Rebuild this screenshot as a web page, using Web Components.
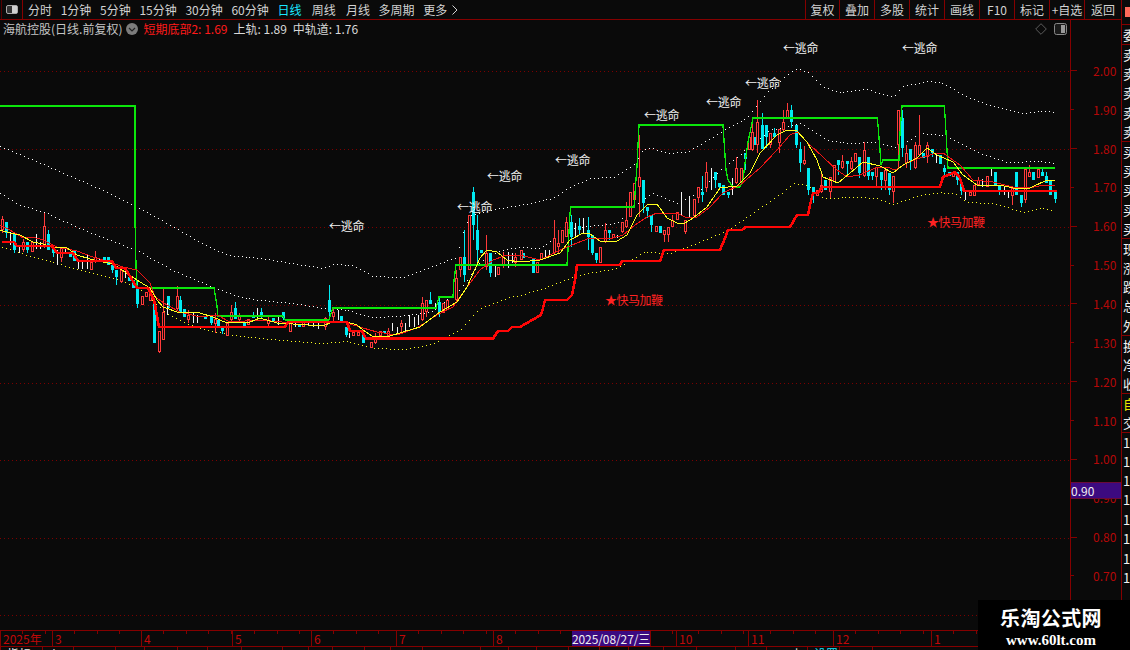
<!DOCTYPE html>
<html lang="zh"><head><meta charset="utf-8"><title>海航控股</title>
<style>
html,body{margin:0;padding:0;background:#0a0a0a;overflow:hidden}
body{font:12px "Noto Sans CJK SC","Liberation Sans",sans-serif;color:#cfcfcf}
</style></head>
<body><k-app></k-app>
<script>
const RED='#850000';
const FONT='"Noto Sans CJK SC","Liberation Sans",sans-serif';
function def(name,html,after){
  customElements.define(name,class extends HTMLElement{
    constructor(){super();this.attachShadow({mode:'open'}).innerHTML=html;if(after)after(this.shadowRoot,this);}
  });
}
def('k-toolbar',`<style>
:host{display:flex;height:20px;box-sizing:border-box;border-bottom:1px solid ${RED};align-items:stretch;font:12px/19px ${FONT};color:#d2d2d2;white-space:nowrap}
.box{width:22px;margin-left:1px;border-left:1px solid #500;border-right:1px solid ${RED};box-sizing:border-box;display:flex;align-items:center;justify-content:center}
.left{display:flex;gap:8.7px;margin-left:5px;align-items:center}
.on{color:#19e6ff}.w{margin-left:1.5px}
.more{display:flex;align-items:center;gap:5px}
.right{display:flex;margin-left:auto}
.right span{width:35px;box-sizing:border-box;border-left:1px solid ${RED};text-align:center}
.right span:first-child{width:34px}.right span:last-child{width:37px}
</style>
<div class="box"><svg width="12" height="9" viewBox="0 0 12 9"><rect x=".5" y=".5" width="11" height="8" rx="1.5" fill="#333" stroke="#aaa"/><rect x="6" y="1" width="5" height="7" fill="#d0d0d0"/></svg></div>
<div class="left"><span>分时</span><span>1分钟</span><span>5分钟</span><span>15分钟</span><span>30分钟</span><span>60分钟</span><span class="on">日线</span><span class="w">周线</span><span class="w">月线</span><span>多周期</span>
<span class="more">更多<svg width="6" height="10" viewBox="0 0 6 10"><path d="M.5.5 5 5 .5 9.5" fill="none" stroke="#d2d2d2"/></svg></span></div>
<div class="right"><span>复权</span><span>叠加</span><span>多股</span><span>统计</span><span>画线</span><span>F10</span><span>标记</span><span>+自选</span><span>返回</span></div>`);

def('k-legend',`<style>
:host{display:flex;height:18px;align-items:center;font:12px/18px ${FONT};color:#c4c4c4;white-space:nowrap;padding-left:3px}
svg.c{margin:0 5px 0 4px}
.r{color:#ff1a1a;margin-right:6px}.m{margin-right:6px;color:#d8d8d8}
.tools{margin-left:auto;display:flex;align-items:center;gap:7px;margin-right:3px}
</style>
<span>海航控股(日线.前复权)</span>
<svg class="c" width="12" height="12" viewBox="0 0 12 12"><circle cx="6" cy="6" r="6" fill="#7c7c7c"/><path d="M3 5l3 3 3-3" fill="none" stroke="#222" stroke-width="1.2"/></svg>
<span class="r">短期底部2: 1.69</span><span class="m">上轨: 1.89</span><span class="m">中轨道: 1.76</span>
<div class="tools"><svg width="12" height="12" viewBox="0 0 12 12"><path d="M6 .7 11.3 6 6 11.3.7 6z" fill="none" stroke="#5c5c5c"/></svg>
<svg width="13" height="12" viewBox="0 0 13 12"><rect x=".5" y=".5" width="12" height="11" rx="2" fill="#1a1a1a" stroke="#888"/><rect x="7" y="2" width="4" height="8" fill="#999"/></svg></div>`);

/* chart data: x in px, y measured on magnified crops (oy + Y/3) */
const C6=`r2,88,120,78,130;c6,96,130,96,143;w10,125,165;c14,132,180,132,190;w19,165,190;r23,155,180,148,185;c27,155,180,155,190;r32,155,185;w36,132,178;w40,155,178;r44,108,165,68,175;c48,132,180,120,180;c53,170,188,170,200;w57,180,225;r61,175,205,175,215;w65,170,190;c70,190,200;c74,180,213;w78,215,238;w82,215,238;w87,192,238;r91,215,240;r95,200,215,183,218;w99,205,215;c104,200,215;c108,200,225;c112,225,240,225,250;c116,240,260,240,285;r121,240,275,235,278;w125,240,265;c129,260,272;c133,270,295;c137,298,342,270,354;r142,318,345;r146,305,320;r150,300,332;c154,335,458;r159,423,485,423,490;r163,367,450,298,450;c168,318,355,318,358;w167,340,375;r177,318,358,287,360;c180,330,365,318,365;c184,358,382;r188,375,390,360,400;w193,365,400;w197,375,398;c205,378,388;c211,375,400,375,405;r215,388,402,370,430;c218,390,408;c222,415,423,415,433;r227,400,437;r231,367,390,345,392;c235,355,388,335,388;r239,378,390,368,392;c244,398,408;r248,388,405;c253,378,385,365,385;w257,355,385`;
const C7=`c261,425,440,415,445;r268,450,462,440,470;c273,445,455;w278,440,465;c283,425,445,425,450;r290,455,485;w295,455,470;c299,462,470;r303,450,470;w308,450,465;w313,455,472;w318,455,478;r325,445,470,440,480;c329,390,425,345,440;r333,425,440,415,455;w338,420,450;c341,438,455;c346,470,495,470,500;w349,490,505;r353,485,497;r358,485,497;c363,495,518;r371,517,535;r375,497,520,490,522;r380,483,497;c384,483,490;r388,483,497,475,500;w392,460,482;w397,470,490;r401,458,472,450,490;w405,460,490;w409,435,472;w414,440,470;w418,435,465;r422,400,450,380,452;r426,390,425,390,440;c430,390,402,365,402;w435,400,420;c439,395,425,385,440;r443,400,430;r447,390,420;r456,325,390,300,395;r460,262,300,262,320;c464,260,315,180,335;r469,135,300;c473,65,165,52,210;c477,180,240,135,280;c481,240,250;r486,250,290,195,300;c490,250,310,250,322;w495,285,320;r498,290,315;r503,262,285,245,295;w508,245,295;w512,250,280;r515,262,278,250,290`;
const C8=`c523,488,503;r521,480,510;c533,503,548;r537,515,550;r541,490,510;w545,480,500;w549,480,500;r554,445,490,390,495;r558,458,470,420,490;r562,420,458;r566,395,440,380,440;c571,395,442,375,470;w575,400,440;c579,408,420,385,435;w583,385,430;c588,420,440,380,480;c592,435,488,435,495;c596,490,510,490,520;r600,470,520;r605,420,455,400,458;c609,420,430,420,450;r613,432,445;w617,435,445;r622,395,425,395,430;r626,390,410,335,415;r630,305,380;r634,280,330,280,355;r639,260,290,135,380;c643,270,340,270,370;c647,350,362,350,385;c651,375,405,375,425;r656,408,425;c660,408,430;r664,420,435,420,455;r668,410,435,410,455;r672,390,410,375,412;r677,365,390;w681,305,375;r685,390,425,390,432;w689,318,380;r694,328,378;r698,292,325,292,340;c702,305,315,258,335;r706,245,295,215,305;w711,235,300;c715,245,270,245,295;c719,280,290,280,300;c723,285,315;c728,305,315,305,325;w732,265,315;r736,235,280,200,282;r741,235,280;c745,190,208,190,240;r749,140,180;r752,125,180,90,182;c755,140,165;r757,95,165,30,190;c762,105,178,70,178;c766,105,140,105,175;r770,130,165,130,175;c774,128,142,115,142;r779,118,160,118,190`;
const C9=`r783,95,120,60,125;r787,60,85,40,88;c791,60,95,45,115;c796,105,165,105,175;c800,178,220,155,245;r804,210,222,168,225;c808,235,300,235,315;c813,292,312,292,340;r817,300,318;r821,285,305,245,308;c825,270,300;r830,260,305,260,325;r834,225,275;c838,210,225,210,255;r842,212,235,195,238;c847,212,222,212,255;r851,212,237,200,240;r855,190,215;c859,200,250,200,265;r864,180,258,155,260;c868,200,258,200,270;c872,245,258,245,270;r876,230,260,230,290;c881,245,270,245,300;r885,240,272,240,300;c889,250,300,250,315;r893,258,305,258,340;r898,60,165,60,230;c902,85,175,60,200;r906,190,218,165,235;c910,178,210,178,240;r915,165,235,155,238;r919,165,195,75,198;c923,190,205;r927,165,200,155,220;c932,178,190,178,200;w936,195,220;c940,195,222;c944,235,245,225,265;c949,245,258;r953,245,260;c957,245,270,245,285;c961,280,302,280,315;w965,300,330;r970,305,317;r974,285,317;r978,270,285,260,288;w982,268,290;r987,258,290;w991,238,258;c995,245,285;c999,285,300,285,315;w1004,290,315;w1008,300,325;r1012,295,317,295,345;c1016,245,315;c1021,315,340,315,350;r1025,238,330,238,340;r1029,245,260,225,262;c1033,245,270;r1038,238,265;c1042,245,258,238,258;c1046,258,280,245,280;c1050,270,315;c1055,305,328,305,338`;
const THICK=[[2,242],[14,242],[17,246],[52,246],[57,253],[73,253],[78,261],[112,261],[116,268],[125,268],[137,288],[148,288],[154,300],[159,327],[285,327],[288,322],[347,322],[350,331],[362,331],[366,338.5],[493,338.5],[498,331],[508,331],[512,327],[520,327],[541,315],[543,308],[545,300],[567,300],[572,295],[575,280],[577,265],[620,265],[622,261],[660,261],[664,250],[720,250],[725,238],[728,230],[742,230],[746,227],[790,227],[797,215],[808,215],[810,205],[813,193],[818,193],[822,187],[940,187],[943,177],[948,175],[955,172],[960,178],[964,191],[1057,191]];
const GREEN=[[0,106],[133,106],[135,106],[135,220],[136,266],[137,288],[214,288],[216,300],[217,306],[218,316],[283,316],[285,320],[329,320],[333,308],[436,308],[439,297],[453,297],[454,280],[456,265],[567,265],[568,250],[570,213],[571,207],[634,207],[637,166],[639,125],[723,125],[724,140],[726,170],[728,180],[733,187],[740,187],[743,180],[745,163],[748,142],[753,118],[877,118],[878,125],[880,150],[881,165],[883,160],[899,160],[900,133],[902,106],[944,106],[945,115],[947,150],[948,168],[1055,168]];
const YEL=[[0,230],[10,233],[20,235],[33,242],[43,244],[53,247],[67,248],[77,255],[90,259],[103,262],[113,264],[125,272],[140,282],[150,288],[157,300],[163,307],[177,312],[200,313],[213,317],[227,323],[250,322],[260,318],[277,323],[293,324],[323,326],[332,322],[347,322],[357,325],[363,330],[372,336],[390,336],[403,332],[420,327],[440,312],[457,302],[467,287],[480,258],[487,250],[497,252],[507,260],[520,262],[540,260],[560,253],[570,240],[583,233],[590,234],[600,241],[617,241],[627,235],[637,215],[648,204],[657,204],[667,218],[677,223],[685,223],[693,218],[707,207],[720,188],[737,186],[750,173],[760,153],[777,135],[787,130],[797,131],[807,142],[817,160],[823,177],[838,183],[850,173],[863,162],[880,166],[893,173],[903,165],[917,158],[927,148],[937,155],[953,162],[963,175],[977,185],[1000,185],[1013,188],[1030,188],[1047,180],[1055,181]];
const THIN=[[0,225],[10,230],[23,238],[33,237],[43,240],[57,247],[77,251],[93,257],[110,262],[123,267],[137,270],[150,283],[155,297],[167,305],[180,312],[200,317],[217,315],[230,322],[260,320],[293,323],[323,322],[347,323],[363,328],[377,332],[397,335],[417,328],[437,315],[453,307],[467,287],[480,270],[493,260],[507,255],[520,255],[540,260],[560,250],[577,243],[590,238],[613,238],[623,235],[635,225],[647,217],[657,213],[677,213],[687,218],[697,217],[710,207],[723,193],[740,185],[760,168],[777,150],[790,135],[797,132],[810,145],[823,157],[837,170],[847,177],[860,175],[877,167],[887,167],[895,170],[907,163],[920,158],[933,154],[943,153],[960,165],[973,180],[993,182],[1013,187],[1030,188],[1043,185],[1055,186]];
const D1=[[0,146],[50,167],[103,190],[153,215],[200,242],[227,255],[260,258],[323,268],[333,264],[353,265],[373,276],[403,277],[427,268],[457,257],[462,235],[470,215],[493,209],[520,205],[553,198],[570,187],[590,178],[613,177],[633,165],[643,149],[653,148],[667,153],[687,152],[707,140],[727,128],[747,118],[767,92],[787,75],[797,68],[808,72],[823,87],[840,92],[867,89],[893,97],[903,86],[927,81],[943,83],[970,98],[993,106],[1020,113],[1043,111],[1057,112]];
const D2=[[0,193],[20,205],[47,213],[77,227],[123,245],[140,252],[173,270],[213,287],[240,297],[260,300],[293,303],[323,308],[347,310],[373,317],[400,316],[430,312],[460,290],[480,262],[500,250],[520,247],[540,248],[555,238],[570,228],[597,225],[617,223],[635,205],[653,193],[677,203],[697,193],[720,170],[745,150],[770,130],[800,123],[827,140],[847,143],[873,142],[897,147],[920,133],[943,135],[960,143],[980,153],[1007,162],[1037,161],[1055,163]];
const D3=[[0,246],[27,255],[53,262],[80,270],[113,278],[137,287],[167,313],[183,322],[207,330],[233,335],[260,338],[320,343],[347,341],[373,348],[407,349],[433,343],[460,330],[480,308],[510,297],[520,295],[547,287],[573,277],[593,272],[617,268],[643,252],[670,253],[697,243],[727,230],[753,213],[783,192],[793,183],[807,185],[823,198],[857,197],[877,198],[893,204],[920,195],[940,192],[957,194],[967,202],[993,203],[1023,212],[1040,208],[1055,210]];
const pts=a=>a.map(p=>p.join(',')).join(' ');
function dots(a,start){
  let d='',i=0;
  for(let x=start||0;x<=a[a.length-1][0];x+=3.96){
    while(i<a.length-2&&a[i+1][0]<x)i++;
    const [x0,y0]=a[i],[x1,y1]=a[i+1];
    const y=y0+(y1-y0)*(x-x0)/(x1-x0);
    d+=`M${Math.round(x)} ${Math.round(y)}h1v1h-1z`;
  }
  return d;
}
function candles(str,oy){
  let o='';
  for(const s of str.split(';')){
    const t=s[0],[x,a,b,h,l]=s.slice(1).split(',').map(Number);
    const T=Math.round(oy+a/3),B=Math.round(oy+b/3),H=h===undefined?T:Math.round(oy+h/3),L=l===undefined?B:Math.round(oy+l/3);
    if(t==='w'){o+=`<rect x="${x}" y="${T}" width="1" height="${B-T}" fill="#f4f4f4"/>`;continue;}
    const col=t==='c'?'#00eaf2':'#ff3a3a';
    o+=`<rect x="${x}" y="${H}" width="1" height="${L-H}" fill="${col}"/>`;
    if(t==='c')o+=`<rect x="${x-1}" y="${T}" width="3" height="${B-T}" fill="${col}"/>`;
    else o+=`<rect x="${x-1}" y="${T}" width="3" height="${B-T}" fill="#0a0a0a"/><path d="M${x-1} ${T}h3v${B-T}h-3zM${x} ${T+1}v${Math.max(B-T-2,0)}h1v-${Math.max(B-T-2,0)}z" fill="${col}" fill-rule="evenodd"/>`;
  }
  return o;
}
const GRID=[71,149,227,305,383,460,538,615];
const TAGS=[[329,226],[457,207],[487,176],[555,160],[644,115],[706,102],[745,83],[783,48],[902,48]];
const body=candles(C6,190)+candles(C7,170)+candles(C8,90)+candles(C9,90);
def('k-chart',`<style>
:host{display:block;width:1070px;height:610px;overflow:hidden}
svg{display:block}
text{font-family:${FONT};font-size:12px}
</style>
<slot></slot>
<svg width="1070" height="592" viewBox="0 38 1070 592" shape-rendering="crispEdges">
${GRID.map(y=>`<line x1="0" x2="1070" y1="${y}" y2="${y}" stroke="#7c0000" stroke-dasharray="1 3"/>`).join('')}
<path d="${dots(D1)}${dots(D2)}" fill="#ffffff"/>
<path d="${dots(D3,2)}" fill="#ffff20"/>
${body}
<polyline points="${pts(GREEN)}" fill="none" stroke="#0be60b" stroke-width="1.3"/>
<polyline points="${pts(THIN)}" fill="none" stroke="#ee1414" stroke-width="1"/>
<polyline points="${pts(YEL)}" fill="none" stroke="#ffff1e" stroke-width="1"/>
<polyline points="${pts(THICK)}" fill="none" stroke="#ff0606" stroke-width="2.6"/>
${TAGS.map(([x,y])=>`<text x="${x}" y="${y+5}" fill="#f2f2f2" shape-rendering="auto" letter-spacing="-.3">←逃命</text>`).join('')}
<text x="605" y="305" fill="#ff2222" letter-spacing="-.5">★快马加鞭</text>
<text x="927" y="227" fill="#ff2222" letter-spacing="-.5">★快马加鞭</text>
</svg>`);

const LABELS=['2.00','1.90','1.80','1.70','1.60','1.50','1.40','1.30','1.20','1.10','1.00','0.90','0.80','0.70'];
def('k-axis',`<style>
:host{display:block;width:51px;height:610px;box-sizing:border-box;border-left:1px solid ${RED};padding-top:31.5px;position:relative;font:12px/1 ${FONT};color:#b40808;overflow:hidden}
.row{height:38.85px;display:flex;align-items:center}
.t{width:6px;height:1px;background:${RED};margin-right:16px}
.row.m .t{width:3px;margin-right:19px}
.tag{position:absolute;left:0;top:462px;width:50px;height:15px;background:#3c0a80;border-top:1px solid #6a0a3a;border-bottom:1px solid #6a0a3a;color:#f0f0f0;line-height:15px;box-sizing:content-box}
</style>
${LABELS.map((l,i)=>`<div class="row ${i%2?'m':''}"><i class="t"></i><span>${l}</span></div>`).join('')}
<div class="tag">0.90</div>`);

const CELLS=[[52,'2025年'],[89,'3'],[91,'4'],[79,'5'],[85,'6'],[97,'7'],[79,'8'],[78,'',1],[26,''],[72,'10'],[85,'11'],[98,'12'],[190,'1']];
def('k-timeline',`<style>
:host{display:flex;height:17px;box-sizing:border-box;border-top:1px solid ${RED};border-bottom:1px solid ${RED};font:12px/15px ${FONT};color:#c00808;overflow:hidden;white-space:nowrap}
.c{box-sizing:border-box;border-left:1px solid ${RED};padding-left:2px;background:repeating-linear-gradient(90deg,transparent 0 21.4px,${RED} 21.4px 22.4px) no-repeat 0 0/100% 3px;flex:none}
.c:first-child{border-left:0;background:none;padding-left:3px}
.d{background:#3c0a80;color:#f0f0f0;text-align:center;padding:0;border:0;letter-spacing:-.1px}
</style>
${CELLS.map(c=>c[2]?`<div class="c d" style="width:${c[0]}px">2025/08/27/三</div>`:`<div class="c" style="width:${c[0]}px">${c[1]}</div>`).join('')}`);

const TABS=[[42,'指标A'],[31,'卜'],[42,''],[29,''],[33,''],[30,''],[34,''],[41,''],[26,''],[24,''],[32,''],[26,''],[32,''],[58,''],[28,''],[28,''],[32,''],[31,''],[29,''],[35,''],[33,''],[39,''],[31,''],[41,'<b>上</b>'],[32,'<u>设置</u>'],[33,''],[260,'']];
def('k-tabs',`<style>
:host{display:flex;height:3px;overflow:hidden;font:12px/14px ${FONT};color:#f0f0f0;white-space:nowrap}
.c{flex:none;box-sizing:border-box;border-left:1px solid ${RED};padding-left:6px;overflow:hidden}
.c:first-child{border-left:0}
b{font-weight:400;margin-left:18px}u{text-decoration:none;color:#19e6ff}
</style>${TABS.map(c=>`<div class="c" style="width:${c[0]}px">${c[1]}</div>`).join('')}`);

const ROWS=[['委',0],...'卖卖卖卖卖'.split('').map((c,i)=>[c,i==0?1:0]),...'买买买买买'.split('').map((c,i)=>[c,i==0?1:0]),...'现涨跌总外'.split('').map((c,i)=>[c,i==0?1:0]),...'换净收'.split('').map((c,i)=>[c,i==0?1:0]),['自',1,'y'],['交',0],...'11111111'.split('').map((c,i)=>[c,i==0?1:0])];
def('k-side',`<style>
:host{display:block;width:9px;height:650px;box-sizing:border-box;border-left:1px solid ${RED};overflow:hidden;font:13px/19.4px ${FONT};color:#f2f2f2;white-space:nowrap}
.top{height:25px;border-bottom:1px solid ${RED};box-sizing:border-box;display:flex;justify-content:flex-end;padding-top:7px}
.top i{width:5px;height:10px;background:#ff6a5a}
.r{height:19.4px;box-sizing:border-box;padding-left:1px}
.s{border-top:1px solid ${RED}}
.y{color:#e6e600}
</style><div class="top"><i></i></div>
${ROWS.map(r=>`<div class="r ${r[1]?'s':''} ${r[2]?'y':''}">${r[0]}</div>`).join('')}`);

def('k-mark',`<style>
:host{position:absolute;right:0;bottom:0;width:152px;height:50px;background:#000;color:#fff;display:flex;flex-direction:column;align-items:center;padding-right:6px;box-sizing:border-box;text-align:center}
.a{font:700 20px/24px ${FONT};margin-top:6px;white-space:nowrap;letter-spacing:.4px}
.b{font:700 15px/16px "Liberation Serif",serif;margin-top:2px;white-space:nowrap}
</style><div class="a">乐淘公式网</div><div class="b">www.60lt.com</div>`);

def('k-app',`<style>
:host{display:grid;grid-template-columns:1121px 9px;width:1130px;height:650px;position:relative;overflow:hidden;background:#0a0a0a}
.main{display:flex;flex-direction:column;min-width:0}
.mid{display:flex;height:610px}
</style>
<div class="main"><k-toolbar></k-toolbar>
<div class="mid"><k-chart><k-legend></k-legend></k-chart><k-axis></k-axis></div>
<k-timeline></k-timeline><k-tabs></k-tabs></div>
<k-side></k-side><k-mark></k-mark>`);
</script>
</body></html>
